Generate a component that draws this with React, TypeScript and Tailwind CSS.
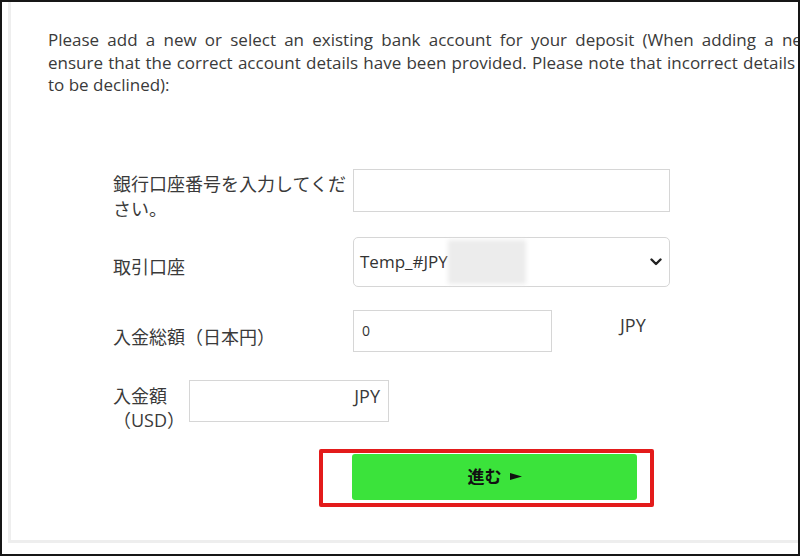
import React from 'react';

const FONT = 'font-["Open_Sans","Noto_Sans_CJK_JP",sans-serif]';

const App: React.FC = () => {
  return (
    <div className={`w-[800px] h-[556px] border-2 border-[#161616] bg-white overflow-hidden text-[#3a3a3a] ${FONT}`}>
      {/* Panel */}
      <div className="ml-[6px] h-[541px] border-l-[3px] border-b-[3px] border-[#eeeeee] pl-[37px] pt-[27px]">
        {/* Intro */}
        <div className="text-[17px] leading-[22.5px] whitespace-nowrap">
          <div className="[word-spacing:3.8px]">Please add a new or select an existing bank account for your deposit (When adding a new bank account, please</div>
          <div className="[word-spacing:0.8px]">ensure that the correct account details have been provided. Please note that incorrect details may cause your deposit</div>
          <div>to be declined):</div>
        </div>

        {/* Form */}
        <div className="mt-[72px] ml-[65px] flex flex-col text-[17px]">
          <div className="flex items-start h-[43px]">
            <label className="w-[240px] text-[18px] leading-[25px] pt-[3px] pr-[4px]">銀行口座番号を入力してください。</label>
            <input type="text" className="w-[317px] h-[43px] border border-[#d6d6d6] outline-none px-2" />
          </div>

          <div className="flex items-start h-[50px] mt-[25px]">
            <label className="w-[240px] text-[18px] leading-[25px] pt-[18px]">取引口座</label>
            <div className="relative w-[317px] h-[50px] border border-[#d6d6d6] rounded-[5px] flex items-center pl-[6px]">
              <span className="text-[#333]">Temp_#JPY</span>
              <span className="inline-block w-[78px] h-[44px] bg-[#ececec] blur-[2px]" />
              <svg className="absolute right-[7px] top-1/2 -translate-y-1/2" width="12" height="8" viewBox="0 0 12 8">
                <path d="M1.5 1.5 L6 6 L10.5 1.5" fill="none" stroke="#222" strokeWidth="2.4" strokeLinecap="round" strokeLinejoin="round" />
              </svg>
            </div>
          </div>

          <div className="flex items-start h-[42px] mt-[23px]">
            <label className="w-[240px] text-[18px] leading-[25px] pt-[15px]">入金総額（日本円）</label>
            <input type="text" defaultValue="0" className="w-[199px] h-[42px] border border-[#d6d6d6] outline-none px-2 text-[14px] text-[#333]" />
            <span className="ml-[68px] text-[18px] leading-[25px] pt-[3px]">JPY</span>
          </div>

          <div className="flex items-start h-[42px] mt-[28px]">
            <label className="w-[76px] text-[18px] leading-[24px] pt-[4px]">
              入金額
              <br />
              （USD）
            </label>
            <div className="w-[200px] h-[42px] border border-[#d6d6d6] flex justify-end pr-[8px] pt-[3px] text-[18px] leading-[25px]">
              <span>JPY</span>
            </div>
          </div>

          <div className="mt-[27px] ml-[206px] w-[335px] h-[58px] border-[4px] border-[#e31b1b] rounded-[2px] pl-[29px] pt-[1px]">
            <button className="w-[285px] h-[46px] bg-[#3be33b] rounded-[3px] text-[17px] font-bold text-[#111] flex items-center justify-center gap-[8px]">
              <span>進む</span>
              <svg width="12" height="7" viewBox="0 0 12 7">
                <polygon points="0,0 12,3.5 0,7" fill="#111" />
              </svg>
            </button>
          </div>
        </div>
      </div>
    </div>
  );
};

export default App;
